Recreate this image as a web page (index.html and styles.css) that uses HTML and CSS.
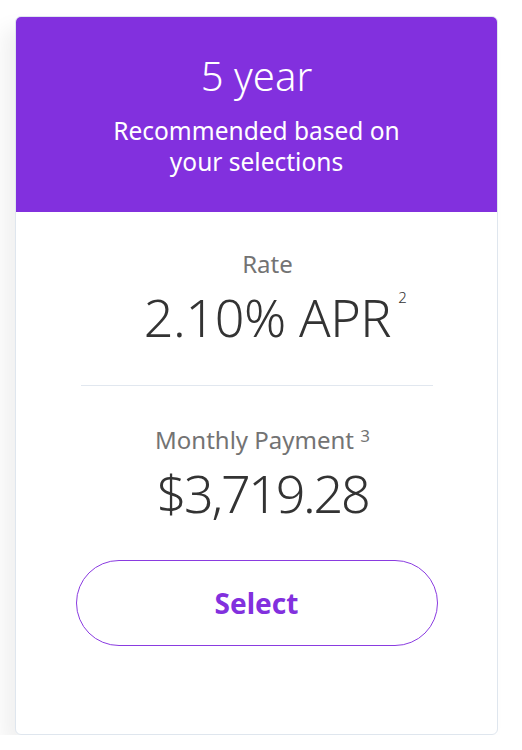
FILE: index.html
```html
<!DOCTYPE html>
<html>
<head>
<meta charset="utf-8">
<link rel="stylesheet" href="styles.css">
</head>
<body>
<div class="card">
  <div class="card-head">
    <div class="term">5 year</div>
    <div class="reco">Recommended based on<br>your selections</div>
  </div>
  <div class="card-body">
    <div class="metric metric-rate">
      <div class="label">Rate</div>
      <div class="value value-rate">2.10% APR<sup class="note">2</sup></div>
    </div>
    <hr class="divider">
    <div class="metric metric-pay">
      <div class="label">Monthly Payment <sup class="note2">3</sup></div>
      <div class="value value-pay">$3,719.28</div>
    </div>
    <button class="select-btn">Select</button>
  </div>
</div>
</body>
</html>
```
FILE: styles.css
```css
html, body {
  margin: 0;
  background: #ffffff;
}
body {
  padding: 16px 0 0 15px;
  font-family: "Noto Sans", "Open Sans", sans-serif;
}
.card {
  width: 483px;
  height: 719px;
  box-sizing: border-box;
  border: 1px solid #dfe6ee;
  border-radius: 6px;
  background: #fff;
  box-shadow: -12px 12px 20px rgba(0, 0, 0, 0.06);
  overflow: hidden;
  display: flex;
  flex-direction: column;
}
.card-head {
  background: #8230de;
  height: 196px;
  margin: -1px -1px 0;
  color: #fff;
  text-align: center;
  padding-top: 34px;
  box-sizing: border-box;
}
.term {
  font-size: 40px;
  font-weight: 300;
  line-height: 52px;
}
.reco {
  font-size: 24.5px;
  line-height: 31px;
  margin-top: 13px;
}
.card-body {
  display: flex;
  flex-direction: column;
  align-items: center;
  padding-top: 37px;
}
.metric {
  display: flex;
  flex-direction: column;
  align-items: center;
}
.metric-rate {
  padding-left: 22px;
}
.metric-pay {
  padding-left: 12px;
}
.label {
  font-size: 24px;
  color: #737373;
  line-height: 30px;
}
.value {
  font-size: 52px;
  font-weight: 300;
  color: #333;
  line-height: 62px;
  margin-top: 7px;
  position: relative;
}
.value-rate {
  letter-spacing: -0.4px;
}
.value-pay {
  letter-spacing: -2.3px;
}
.note {
  position: absolute;
  left: 100%;
  margin-left: 7px;
  top: 4px;
  font-size: 15px;
  font-weight: 300;
  line-height: 1;
  letter-spacing: 0;
}
.note2 {
  font-size: 17px;
  vertical-align: 7px;
  line-height: 1;
}
.divider {
  width: 352px;
  border: 0;
  border-top: 1px solid #e1e7ef;
  margin: 37px 0 39px;
}
.select-btn {
  margin-top: 36px;
  width: 362px;
  height: 86px;
  border: 1px solid #8a3be0;
  border-radius: 43px;
  background: #fff;
  color: #8230de;
  font-family: inherit;
  font-size: 28px;
  font-weight: 700;
}
```
